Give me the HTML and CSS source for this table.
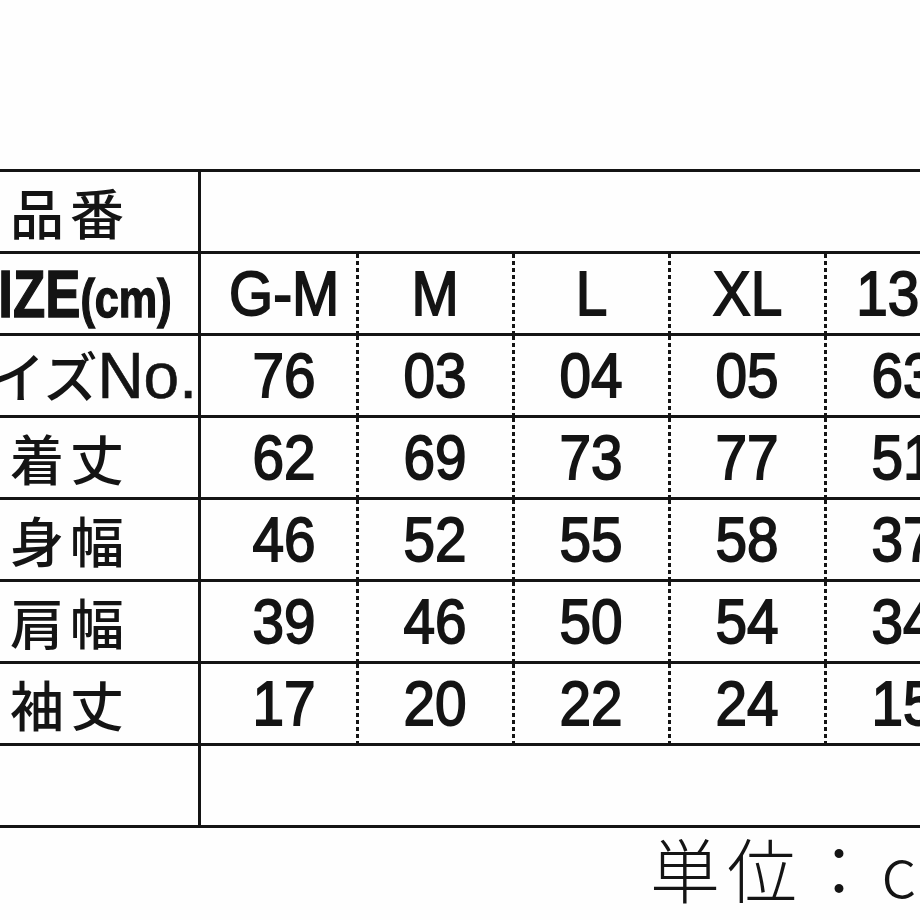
FILE: index.html
```html
<!DOCTYPE html>
<html lang="ja">
<head>
<meta charset="utf-8">
<title>サイズ表</title>
<link rel="stylesheet" href="styles.css">
</head>
<body>
<div class="sheet">
  <div class="chart">
    <div class="row">
      <div class="label"><span class="txt spaced">品番</span></div>
      <div class="wide"></div>
    </div>
    <div class="row">
      <div class="label"><span class="txt size-text">SIZE<span class="unit-small">(cm)</span></span></div>
      <div class="cell first"><span class="val">G-M</span></div>
      <div class="cell dotted"><span class="val">M</span></div>
      <div class="cell dotted"><span class="val">L</span></div>
      <div class="cell dotted"><span class="val">XL</span></div>
      <div class="cell dotted"><span class="val">130</span></div>
    </div>
    <div class="row">
      <div class="label"><span class="txt"><span class="kana">サイズ</span><span class="latin">No.</span></span></div>
      <div class="cell first"><span class="val">76</span></div>
      <div class="cell dotted"><span class="val">03</span></div>
      <div class="cell dotted"><span class="val">04</span></div>
      <div class="cell dotted"><span class="val">05</span></div>
      <div class="cell dotted"><span class="val">63</span></div>
    </div>
    <div class="row">
      <div class="label"><span class="txt spaced">着丈</span></div>
      <div class="cell first"><span class="val">62</span></div>
      <div class="cell dotted"><span class="val">69</span></div>
      <div class="cell dotted"><span class="val">73</span></div>
      <div class="cell dotted"><span class="val">77</span></div>
      <div class="cell dotted"><span class="val">51</span></div>
    </div>
    <div class="row">
      <div class="label"><span class="txt spaced">身幅</span></div>
      <div class="cell first"><span class="val">46</span></div>
      <div class="cell dotted"><span class="val">52</span></div>
      <div class="cell dotted"><span class="val">55</span></div>
      <div class="cell dotted"><span class="val">58</span></div>
      <div class="cell dotted"><span class="val">37</span></div>
    </div>
    <div class="row">
      <div class="label"><span class="txt spaced">肩幅</span></div>
      <div class="cell first"><span class="val">39</span></div>
      <div class="cell dotted"><span class="val">46</span></div>
      <div class="cell dotted"><span class="val">50</span></div>
      <div class="cell dotted"><span class="val">54</span></div>
      <div class="cell dotted"><span class="val">34</span></div>
    </div>
    <div class="row">
      <div class="label"><span class="txt spaced">袖丈</span></div>
      <div class="cell first"><span class="val">17</span></div>
      <div class="cell dotted"><span class="val">20</span></div>
      <div class="cell dotted"><span class="val">22</span></div>
      <div class="cell dotted"><span class="val">24</span></div>
      <div class="cell dotted"><span class="val">15</span></div>
    </div>
    <div class="row">
      <div class="label"></div>
      <div class="wide"></div>
    </div>
  </div>
  <div class="unit">単位：cm</div>
</div>
</body>
</html>
```

FILE: styles.css
```css
html, body {
  margin: 0;
  padding: 0;
  overflow: hidden;
  background: #fefefe;
}

body {
  width: 920px;
  height: 920px;
  color: #141414;
}

.sheet {
  padding-top: 169px;
}

.chart {
  margin-left: -64px;
  width: 1043px;
  border-top: 3px solid #141414;
}

.row {
  display: flex;
  height: 79px;
  border-bottom: 3px solid #141414;
}

.label {
  flex: none;
  width: 262px;
  border-right: 3px solid #141414;
  display: flex;
  align-items: center;
  justify-content: center;
  font-family: "Noto Sans CJK JP", "Noto Sans CJK SC", sans-serif;
  font-weight: 500;
  font-size: 54px;
  line-height: 1;
  white-space: nowrap;
}

.txt {
  display: inline-block;
  white-space: nowrap;
}

.spaced {
  letter-spacing: 6px;
  padding-left: 6px;
}

.size-text {
  font-family: "Liberation Sans", Arial, sans-serif;
  font-weight: bold;
  font-size: 66px;
  transform: scaleX(0.8);
  -webkit-text-stroke: 1.4px #141414;
}

.unit-small {
  font-size: 54px;
}

.kana {
  font-size: 54px;
}

.latin {
  font-family: "Liberation Sans", Arial, sans-serif;
  font-weight: normal;
  font-size: 64px;
  -webkit-text-stroke: 0.6px #141414;
}

.wide {
  flex: 1;
}

.cell {
  flex: none;
  box-sizing: border-box;
  width: 156px;
  display: flex;
  align-items: center;
  justify-content: center;
  font-family: "Liberation Sans", Arial, sans-serif;
  font-weight: normal;
  font-size: 63px;
  line-height: 1;
  white-space: nowrap;
}

.cell.first {
  width: 155px;
  padding-left: 11px;
}

.cell.dotted {
  padding-left: 3px;
  background-image: linear-gradient(#141414 4px, transparent 4px);
  background-size: 3px 7px;
  background-repeat: repeat-y;
  background-position: 0 0;
}

.val {
  display: inline-block;
  transform: scaleX(0.9);
  -webkit-text-stroke: 1.8px #141414;
}

.unit {
  margin-top: 5px;
  padding-left: 650px;
  font-family: "Noto Sans CJK JP", "Noto Sans CJK SC", sans-serif;
  font-weight: 300;
  font-size: 70px;
  line-height: 1;
  letter-spacing: 7px;
  white-space: nowrap;
}
```
